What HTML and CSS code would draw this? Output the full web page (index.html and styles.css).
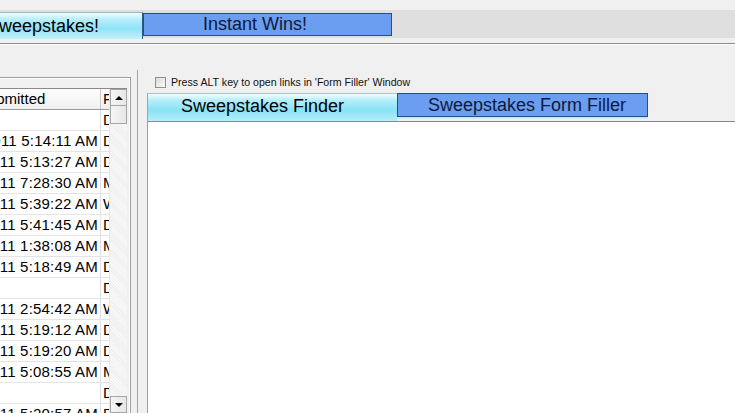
FILE: index.html
```html
<!DOCTYPE html>
<html lang="en">
<head>
    <meta charset="UTF-8">
    <title>Sweepstakes</title>
    <link rel="stylesheet" href="styles.css">
</head>
<body>

<!-- Top tab strip -->
<div class="tabbar">
    <div class="bigtab tab-sweeps">Sweepstakes!</div>
    <div class="bigtab tab-instant">Instant Wins!</div>
</div>
<div class="rule"></div>

<div class="main">
    <!-- Left: entries list -->
    <div class="left-panel">
        <div class="group">
            <div class="list">
                <div class="list-cols">
                    <div class="row head">
                        <div class="c-date"><span>Date Submitted</span></div>
                        <div class="c-freq">Frequency</div>
                    </div>
                    <div class="row"><div class="c-date"><span></span></div><div class="c-freq">Daily</div></div>
                    <div class="row"><div class="c-date"><span>3/14/2011 5:14:11 AM</span></div><div class="c-freq">Daily</div></div>
                    <div class="row"><div class="c-date"><span>3/14/2011 5:13:27 AM</span></div><div class="c-freq">Daily</div></div>
                    <div class="row"><div class="c-date"><span>3/01/2011 7:28:30 AM</span></div><div class="c-freq">Monthly</div></div>
                    <div class="row"><div class="c-date"><span>3/10/2011 5:39:22 AM</span></div><div class="c-freq">Weekly</div></div>
                    <div class="row"><div class="c-date"><span>3/14/2011 5:41:45 AM</span></div><div class="c-freq">Daily</div></div>
                    <div class="row"><div class="c-date"><span>3/02/2011 1:38:08 AM</span></div><div class="c-freq">Monthly</div></div>
                    <div class="row"><div class="c-date"><span>3/14/2011 5:18:49 AM</span></div><div class="c-freq">Daily</div></div>
                    <div class="row"><div class="c-date"><span></span></div><div class="c-freq">Daily</div></div>
                    <div class="row"><div class="c-date"><span>3/09/2011 2:54:42 AM</span></div><div class="c-freq">Weekly</div></div>
                    <div class="row"><div class="c-date"><span>3/14/2011 5:19:12 AM</span></div><div class="c-freq">Daily</div></div>
                    <div class="row"><div class="c-date"><span>3/14/2011 5:19:20 AM</span></div><div class="c-freq">Daily</div></div>
                    <div class="row"><div class="c-date"><span>3/01/2011 5:08:55 AM</span></div><div class="c-freq">Monthly</div></div>
                    <div class="row"><div class="c-date"><span></span></div><div class="c-freq">Daily</div></div>
                    <div class="row"><div class="c-date"><span>3/14/2011 5:20:57 AM</span></div><div class="c-freq">Daily</div></div>
                </div>
                <div class="vscroll">
                    <div class="sb-btn"><span class="arrow-up"></span></div>
                    <div class="sb-btn thumb"></div>
                    <div class="sb-track"></div>
                    <div class="sb-btn"><span class="arrow-down"></span></div>
                </div>
            </div>
        </div>
    </div>

    <!-- Right: finder / form filler -->
    <div class="right-panel">
        <label class="alt-check">
            <span class="box"></span>
            Press ALT key to open links in 'Form Filler' Window
        </label>
        <div class="subtabs">
            <div class="subtab sub-finder">Sweepstakes Finder</div>
            <div class="subtab sub-filler">Sweepstakes Form Filler</div>
        </div>
        <div class="page"></div>
    </div>
</div>

</body>
</html>
```

FILE: styles.css
```css
body {
    margin: 0;
    width: 735px;
    height: 413px;
    overflow: hidden;
    background: #f0f0f0;
    font-family: "Liberation Sans", Arial, sans-serif;
    color: #000;
}

/* top tab strip */
.tabbar {
    margin-top: 10px;
    height: 28px;
    background: #dfdfdf;
    display: flex;
    align-items: flex-start;
}

.bigtab {
    box-sizing: border-box;
    font-size: 18px;
    display: flex;
    align-items: center;
}

.tab-sweeps {
    margin-left: -30px;
    width: 173px;
    height: 27px;
    margin-top: 2px;
    padding-left: 17px;
    background: linear-gradient(#f2fbfd, #b6eef9 25%, #8fe3f6 60%, #c4f1fb);
    border-top: 1px solid #9cb8c0;
    border-right: 1px solid #2c5a86;
}

.tab-instant {
    width: 249px;
    height: 23px;
    margin-top: 3px;
    padding-left: 59px;
    background: #6b9df0;
    border: 1px solid #274d86;
    color: #0b1b3c;
}

.rule {
    margin-top: 5px;
    border-top: 1px solid #8c8c8c;
    border-bottom: 1px solid #fbfbfb;
}

.main {
    display: flex;
    padding-top: 25px;
    height: 343px;
}

/* left list */
.left-panel {
    width: 137px;
    border-right: 1px solid #a5a5a5;
}

.group {
    margin-top: 7px;
    margin-right: 6px;
    height: 336px;
    border-top: 1px solid #a0a0a0;
    border-right: 1px solid #a0a0a0;
    box-shadow: inset -1px 1px 0 #fff;
    padding-top: 10px;
    padding-right: 3px;
    box-sizing: border-box;
}

.list {
    display: flex;
    height: 324px;
    border-top: 1px solid #8a8a8a;
    background: #fff;
}

.list-cols {
    flex: 1;
    overflow: hidden;
}

.row {
    display: flex;
    height: 21px;
    box-sizing: border-box;
    border-bottom: 1px solid #e4e4e4;
    font-size: 15px;
    line-height: 20px;
}

.row.head {
    height: 21px;
    background: linear-gradient(#fdfdfd, #f0f0f0);
    border-bottom: 1px solid #9a9a9a;
}

.c-date {
    width: 101px;
    flex-shrink: 0;
    display: flex;
    justify-content: flex-end;
    overflow: hidden;
    white-space: nowrap;
    padding-right: 2px;
    box-sizing: border-box;
    border-right: 1px solid #e0e0e0;
    letter-spacing: 0.2px;
}

.head .c-date {
    justify-content: flex-start;
    border-right-color: #c8c8c8;
    letter-spacing: 0;
}

.head .c-date span {
    margin-left: -58px;
}

.c-freq {
    flex: 1;
    padding-left: 2px;
    overflow: hidden;
    white-space: nowrap;
}

/* scrollbar */
.vscroll {
    width: 17px;
    display: flex;
    flex-direction: column;
    background: #f4f4f4;
    border-left: 1px solid #e8e8e8;
}

.sb-btn {
    height: 17px;
    box-sizing: border-box;
    border: 1px solid #a6a6a6;
    background: linear-gradient(90deg, #f6f6f6, #e6e6e6);
    display: flex;
    align-items: center;
    justify-content: center;
}

.thumb {
    height: 18px;
    border-top: none;
}

.sb-track {
    flex: 1;
    background: repeating-linear-gradient(45deg, #f9f9f9 0 1px, #efefef 1px 2px);
}

.arrow-up {
    border-left: 4px solid transparent;
    border-right: 4px solid transparent;
    border-bottom: 4px solid #000;
}

.arrow-down {
    border-left: 4px solid transparent;
    border-right: 4px solid transparent;
    border-top: 4px solid #000;
}

/* right side */
.right-panel {
    flex: 1;
    display: flex;
    flex-direction: column;
    padding-left: 9px;
}

.alt-check {
    margin-top: 6px;
    margin-left: 8px;
    display: flex;
    align-items: center;
    gap: 5px;
    font-size: 10.6px;
    height: 12px;
    color: #111;
}

.box {
    width: 9px;
    height: 9px;
    border: 1px solid #8e8f8f;
    background: linear-gradient(135deg, #dcdcdc, #fafafa);
}

.subtabs {
    display: flex;
    margin-top: 5px;
    height: 28px;
    align-items: flex-start;
}

.subtab {
    box-sizing: border-box;
    width: 250px;
    font-size: 18px;
    display: flex;
    align-items: center;
}

.sub-finder {
    height: 28px;
    background: linear-gradient(#f4fcfe, #b2edf9 25%, #88e2f6 60%, #b8eefa);
    border-left: 1px solid #9aa6a9;
    border-top: 1px solid #a9c6cd;
    padding-left: 33px;
    padding-bottom: 2px;
}

.sub-filler {
    width: 251px;
    height: 24px;
    background: #6b9df0;
    border: 1px solid #274d86;
    color: #0b1b3c;
    box-shadow: 0 2px 0 #c6ecfa;
    padding-left: 30px;
}

.page {
    flex: 1;
    background: #fff;
    border-left: 1px solid #a0a0a0;
    border-top: 1px solid #8a8a8a;
}
```
